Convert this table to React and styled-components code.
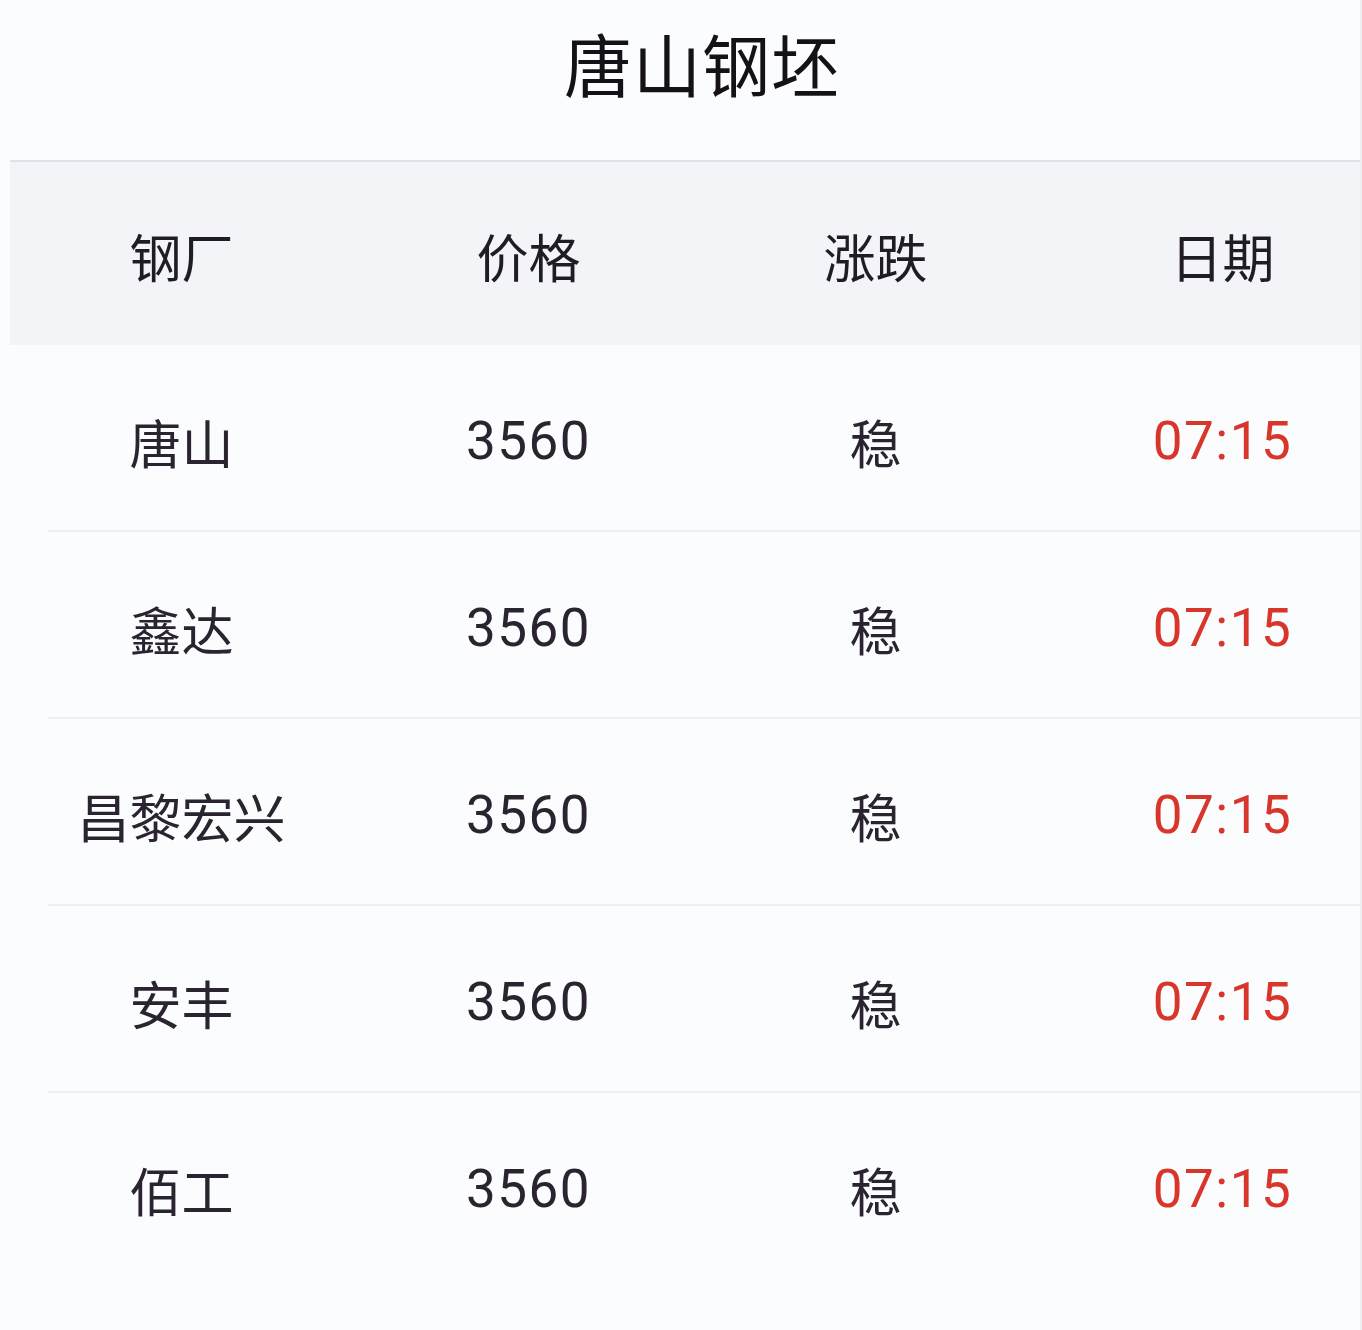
import React from "react";
import styled, { createGlobalStyle } from "styled-components";

const Global = createGlobalStyle`
  html, body { margin: 0; padding: 0; background: #fbfcfe; }
  body { overflow: hidden; font-family: "Noto Sans", "Noto Sans CJK SC", sans-serif; }
`;

const Page = styled.div`
  width: 1362px;
  min-height: 1330px;
  background: #fbfcfe;
  overflow: hidden;
  position: relative;
  border-right: 2px solid #eef0f3;
  box-sizing: border-box;
`;

const Title = styled.h1`
  margin: 0;
  height: 160px;
  display: flex;
  align-items: center;
  justify-content: center;
  padding-left: 44px;
  padding-bottom: 36px;
  box-sizing: border-box;
  font-family: "Noto Sans CJK SC", sans-serif;
  font-weight: 400;
  font-size: 68px;
  color: #141218;
  letter-spacing: 1px;
`;

const Grid = styled.div`
  display: grid;
  grid-template-columns: repeat(4, 347px);
  align-items: center;
`;

const HeaderBand = styled.div`
  margin-left: 10px;
  border-top: 2px solid #dfe2e8;
  background: #f3f4f7;
  height: 185px;
  display: flex;
  align-items: center;
  padding-top: 4px;
  box-sizing: border-box;
`;

const HeaderGrid = styled(Grid)`
  margin-left: -2px;
`;

const Cell = styled.div`
  text-align: center;
  font-family: ${(p) => (p.$num ? 'Roboto, "Noto Sans", sans-serif' : '"Noto Sans CJK SC", sans-serif')};
  font-size: ${(p) => (p.$num ? "53px" : "52px")};
  font-weight: 400;
  color: ${(p) => (p.$red ? "#d8352b" : "#2a2330")};
  letter-spacing: ${(p) => (p.$num ? "1.5px" : "0")};
  line-height: 1;
`;

const HeadCell = styled(Cell)`
  color: #1f1c24;
`;

const Row = styled.div`
  height: 187px;
  display: flex;
  align-items: center;
  padding-top: 6px;
  box-sizing: border-box;
  position: relative;
  &:not(:last-child)::after {
    content: "";
    position: absolute;
    left: 48px;
    right: 0;
    bottom: 0;
    height: 2px;
    background: #eceef2;
  }
`;

const RowGrid = styled(Grid)`
  margin-left: 8px;
`;

const rows = ["唐山", "鑫达", "昌黎宏兴", "安丰", "佰工"];

export default function App() {
  return (
    <Page>
      <Global />
      <Title>唐山钢坯</Title>
      <HeaderBand>
        <HeaderGrid>
          <HeadCell>钢厂</HeadCell>
          <HeadCell>价格</HeadCell>
          <HeadCell>涨跌</HeadCell>
          <HeadCell>日期</HeadCell>
        </HeaderGrid>
      </HeaderBand>
      {rows.map((name) => (
        <Row key={name}>
          <RowGrid>
            <Cell>{name}</Cell>
            <Cell $num>3560</Cell>
            <Cell>稳</Cell>
            <Cell $num $red>07:15</Cell>
          </RowGrid>
        </Row>
      ))}
    </Page>
  );
}
